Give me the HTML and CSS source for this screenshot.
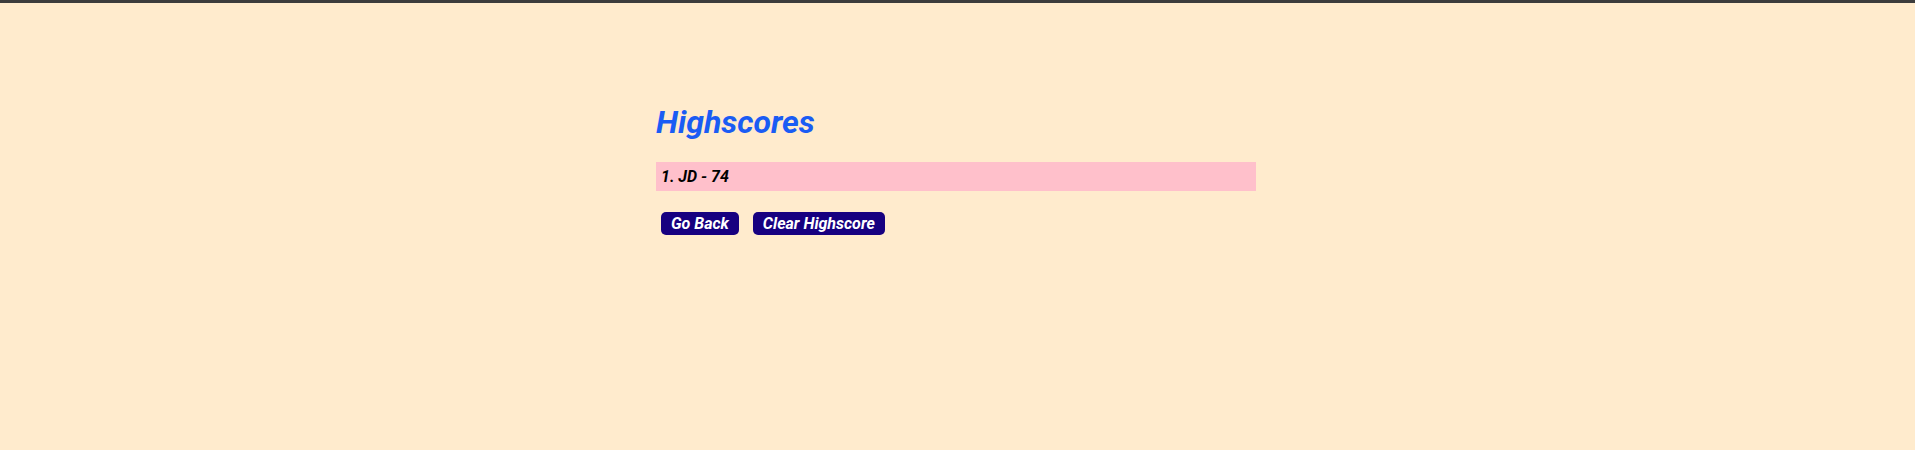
FILE: index.html
```html
<!DOCTYPE html>
<html lang="en">
<head>
<meta charset="utf-8">
<title>Highscores</title>
<link rel="stylesheet" href="styles.css">
</head>
<body>
<div class="topbar"></div>
<main class="wrap">
  <h1 class="title">Highscores</h1>
  <ol class="scores">
    <li class="score">1. JD - 74</li>
  </ol>
  <div class="actions">
    <button class="btn">Go Back</button>
    <button class="btn">Clear Highscore</button>
  </div>
</main>
</body>
</html>
```

FILE: styles.css
```css
html, body {
  margin: 0;
  padding: 0;
}
body {
  background: #ffebcd;
  font-family: Roboto, "Liberation Sans", sans-serif;
  font-style: italic;
  font-weight: 700;
  height: 450px;
  overflow: hidden;
}
.topbar {
  height: 3px;
  background: #3c3c3c;
}
.wrap {
  width: 600px;
  margin-left: 656px;
  padding-top: 79px;
}
.title {
  margin: 21px 0;
  font-size: 32px;
  font-weight: 700;
  color: #1a5cf4;
}
.scores {
  list-style: none;
  margin: 0 0 16px;
  padding: 0;
}
.score {
  background: #ffc0cb;
  color: #000;
  font-size: 16px;
  padding: 5px 5px;
}
.actions {
  display: flex;
  gap: 14px;
  padding: 5px;
}
.btn {
  font-family: Roboto, "Liberation Sans", sans-serif;
  font-style: italic;
  font-weight: 700;
  font-size: 16px;
  line-height: normal;
  color: #fff;
  background: #170080;
  border: none;
  border-radius: 5px;
  padding: 2px 10px;
}
```
